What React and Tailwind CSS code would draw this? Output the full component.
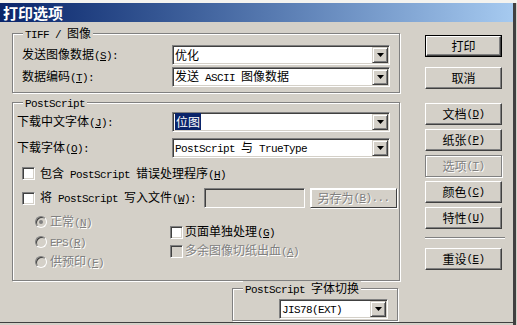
import React from 'react';

// latin runs in SimSun are half-width (6px), so use a narrowed mono face
const L = ({ children, className = '' }) => (
  <span className={`font-['Liberation_Mono',monospace] text-[11px] tracking-[-0.6px] ${className}`}>{children}</span>
);

const K = ({ k, colon }) => (
  <L>
    (<u>{k}</u>){colon ? ':' : ''}
  </L>
);

const dis = 'text-[#808080] [text-shadow:1px_1px_0_#fff]';

const Arrow = () => (
  <div className="w-[16px] h-[16px] shrink-0 flex items-center justify-center bg-[#d4d0c8] border border-t-[#d4d0c8] border-l-[#d4d0c8] border-b-[#404040] border-r-[#404040] shadow-[inset_1px_1px_0_#fff,inset_-1px_-1px_0_#808080]">
    <svg width="7" height="4" viewBox="0 0 7 4">
      <path d="M0 0h7L3.5 4z" fill="#000" />
    </svg>
  </div>
);

const Select = ({ children, className = '' }) => (
  <div className={`flex h-[20px] items-center bg-white p-[1px] border border-t-[#808080] border-l-[#808080] border-b-white border-r-white shadow-[inset_1px_1px_0_#404040,inset_-1px_-1px_0_#d4d0c8] ${className}`}>
    <div className="flex-1 min-w-0 pl-[1px] whitespace-nowrap leading-[16px]">{children}</div>
    <Arrow />
  </div>
);

const Group = ({ label, className = '', children }) => (
  <div className={`relative border border-[#808080] shadow-[inset_1px_1px_0_#fff,1px_1px_0_#fff] ${className}`}>
    <span className="absolute top-[-8px] left-[10px] bg-[#d4d0c8] px-[2px] leading-[14px] whitespace-nowrap">{label}</span>
    {children}
  </div>
);

const Check = ({ disabled }) => (
  <div
    className={`w-[13px] h-[13px] shrink-0 border border-t-[#808080] border-l-[#808080] border-b-white border-r-white shadow-[inset_1px_1px_0_#404040,inset_-1px_-1px_0_#d4d0c8] ${disabled ? 'bg-[#d4d0c8]' : 'bg-white'}`}
  />
);

const Radio = ({ checked }) => (
  <div className="w-[12px] h-[12px] shrink-0 rounded-full flex items-center justify-center bg-[#d4d0c8] border border-t-[#808080] border-l-[#808080] border-b-white border-r-white shadow-[inset_1px_1px_0_#404040]">
    {checked && <div className="w-[4px] h-[4px] rounded-full bg-[#808080]" />}
  </div>
);

const Btn = ({ children, def, disabled, className = '' }) => {
  if (disabled) {
    return (
      <div className={`flex items-center justify-center border border-[#808080] shadow-[inset_1px_1px_0_#fff,1px_1px_0_#fff] whitespace-nowrap ${dis} ${className}`}>
        {children}
      </div>
    );
  }
  const inner = (
    <div className="flex-1 flex items-center justify-center whitespace-nowrap border border-t-white border-l-white border-b-[#404040] border-r-[#404040] shadow-[inset_-1px_-1px_0_#808080,inset_1px_1px_0_#d4d0c8]">
      {children}
    </div>
  );
  return def ? (
    <div className={`flex border border-black ${className}`}>{inner}</div>
  ) : (
    <div className={`flex ${className}`}>{inner}</div>
  );
};

export default function App() {
  return (
    <div className="w-[517px] h-[325px] overflow-hidden flex flex-col bg-[#d4d0c8] text-black text-[12px] leading-[14px] font-['Noto_Sans_CJK_SC',sans-serif]">
      <div className="h-[3px] shrink-0 bg-[#f4f3ef]" />
      <div className="flex flex-1 min-h-0">
        <div className="w-[513px] flex flex-col">
          <div className="h-[19px] shrink-0 pl-[3px] bg-linear-to-r from-[#0a246a] to-[#a6caf0] text-white font-bold text-[15px] leading-[19px]">
            打印选项
          </div>

          <div className="h-[300px] flex">
            {/* left side: option groups */}
            <div className="pl-[12px] w-[400px] flex flex-col">
              <Group label={<><L>TIFF / </L>图像</>} className="mt-[11px] w-[388px] h-[60px]">
                <div className="pt-[11px] flex flex-col gap-[2px]">
                  <div className="flex items-center h-[20px]">
                    <span className="w-[159px] pl-[9px] whitespace-nowrap">发送图像数据<K k="S" colon /></span>
                    <Select className="w-[218px]">优化</Select>
                  </div>
                  <div className="flex items-center h-[20px]">
                    <span className="w-[159px] pl-[9px] whitespace-nowrap">数据编码<K k="T" colon /></span>
                    <Select className="w-[218px]">
                      发送<L> ASCII </L>图像数据
                    </Select>
                  </div>
                </div>
              </Group>

              <Group label={<L>PostScript</L>} className="mt-[9px] w-[388px] h-[179px]">
                <div className="pt-[9px] flex flex-col">
                  <div className="flex items-center h-[20px]">
                    <span className="w-[159px] pl-[4px] whitespace-nowrap">下载中文字体<K k="J" colon /></span>
                    <Select className="w-[218px]">
                      <span className="bg-[#0a246a] text-white px-[1px]">位图</span>
                    </Select>
                  </div>
                  <div className="flex items-center h-[20px] mt-[6px]">
                    <span className="w-[159px] pl-[4px] whitespace-nowrap">下载字体<K k="O" colon /></span>
                    <Select className="w-[218px]">
                      <L>PostScript </L>与<L> TrueType</L>
                    </Select>
                  </div>

                  <div className="flex items-center h-[13px] mt-[9px] pl-[9px]">
                    <Check />
                    <span className="ml-[5px] whitespace-nowrap">
                      包含<L> PostScript </L>错误处理程序<K k="H" />
                    </span>
                  </div>

                  <div className="flex items-center h-[20px] mt-[8px] pl-[9px]">
                    <Check />
                    <span className="ml-[5px] w-[164px] whitespace-nowrap">
                      将<L> PostScript </L>写入文件<K k="W" colon />
                    </span>
                    <div className="w-[101px] h-[20px] bg-[#d4d0c8] border border-t-[#808080] border-l-[#808080] border-b-white border-r-white shadow-[inset_1px_1px_0_#404040,inset_-1px_-1px_0_#d4d0c8]" />
                    <Btn disabled className="ml-[5px] w-[87px] h-[20px] border-t-white border-l-white border-b-[#404040] border-r-[#404040] shadow-[inset_-1px_-1px_0_#808080]">
                      另存为<K k="B" /><L>...</L>
                    </Btn>
                  </div>

                  <div className="flex mt-[5px]">
                    <div className="w-[157px] pl-[22px] flex flex-col gap-[2px]">
                      <div className={`flex items-center h-[18px] ${dis}`}>
                        <Radio checked />
                        <span className="ml-[3px]">正常<K k="N" /></span>
                      </div>
                      <div className={`flex items-center h-[18px] ${dis}`}>
                        <Radio />
                        <span className="ml-[3px]"><L>EPS</L><K k="R" /></span>
                      </div>
                      <div className={`flex items-center h-[18px] ${dis}`}>
                        <Radio />
                        <span className="ml-[3px]">供预印<K k="F" /></span>
                      </div>
                    </div>
                    <div className="pt-[10px] flex flex-col gap-[1px]">
                      <div className="flex items-center h-[18px]">
                        <Check />
                        <span className="ml-[2px]">页面单独处理<K k="G" /></span>
                      </div>
                      <div className={`flex items-center h-[18px] ${dis}`}>
                        <Check disabled />
                        <span className="ml-[2px]">多余图像切纸出血<K k="A" /></span>
                      </div>
                    </div>
                  </div>
                </div>
              </Group>

              <Group label={<><L>PostScript </L>字体切换</>} className="mt-[7px] ml-[220px] w-[166px] h-[33px]">
                <div className="pt-[10px] pl-[46px]">
                  <Select className="w-[109px]">
                    <L>JIS78(EXT)</L>
                  </Select>
                </div>
              </Group>
            </div>

            {/* right side: buttons */}
            <div className="ml-[25px] w-[77px] pt-[13px] flex flex-col">
              <Btn def className="h-[22px]">打印</Btn>
              <Btn className="h-[22px] mt-[10px]">取消</Btn>
              <Btn className="h-[22px] mt-[14px]">文档<K k="D" /></Btn>
              <Btn className="h-[22px] mt-[4px]">纸张<K k="P" /></Btn>
              <Btn disabled className="h-[22px] mt-[4px]">选项<K k="T" /></Btn>
              <Btn className="h-[22px] mt-[4px]">颜色<K k="C" /></Btn>
              <Btn className="h-[22px] mt-[4px]">特性<K k="U" /></Btn>
              <div className="w-[80px] h-[2px] mt-[8px] border-t border-t-[#808080] border-b border-b-white" />
              <Btn className="h-[22px] mt-[9px]">重设<K k="E" /></Btn>
            </div>
          </div>

          <div className="h-px shrink-0 bg-[#404040]" />
        </div>
        <div className="w-[3px] bg-[#404040]" />
        <div className="w-px bg-[#d4d0c8]" />
      </div>
    </div>
  );
}
